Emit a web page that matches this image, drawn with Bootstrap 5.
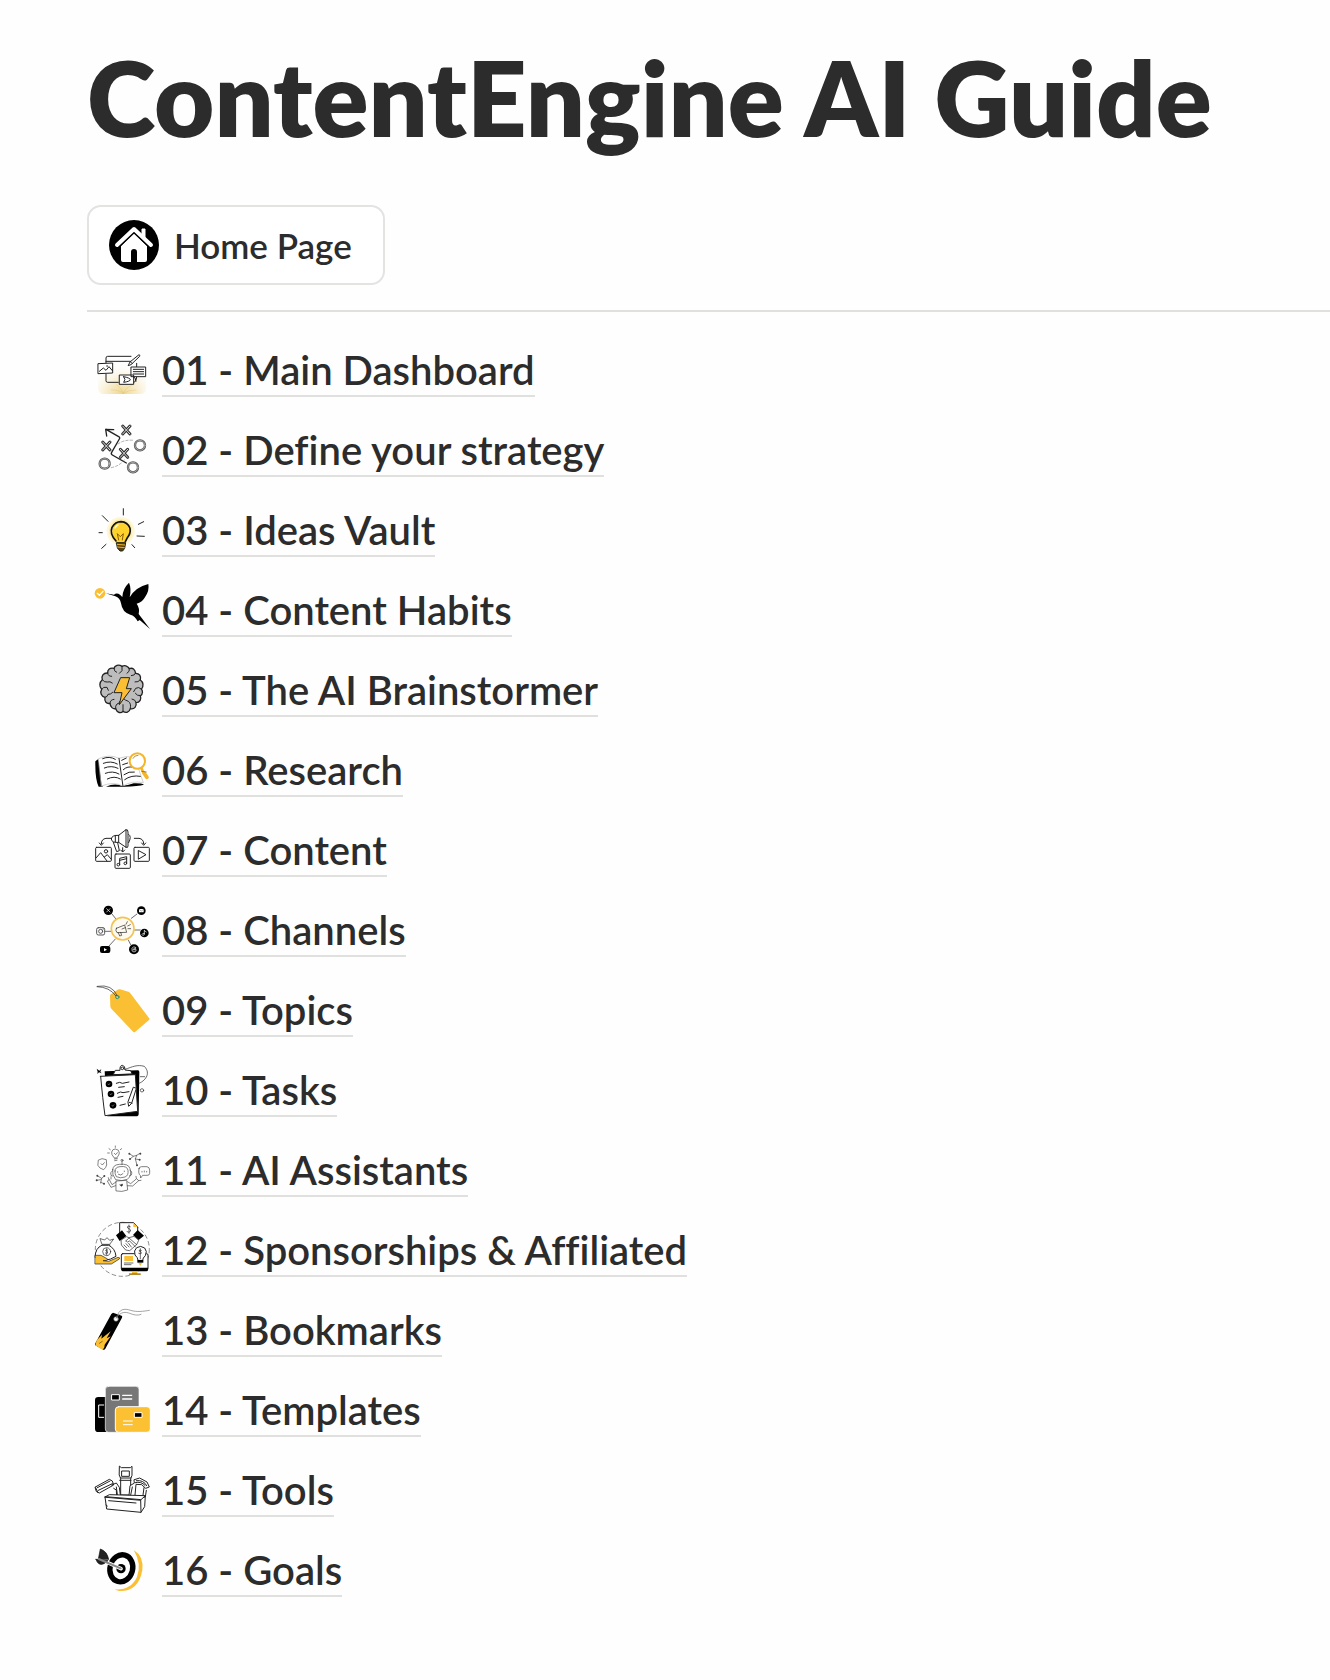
<!DOCTYPE html>
<html lang="en">
<head>
<meta charset="utf-8">
<meta name="viewport" content="width=device-width, initial-scale=1">
<title>ContentEngine AI Guide</title>
<link href="https://cdn.jsdelivr.net/npm/bootstrap@5.3.0/dist/css/bootstrap.min.css" rel="stylesheet">
<style>
  body { font-family: Lato, "Open Sans", sans-serif; color: #2c2c2c; background: #fefefe; }
  .guide { padding: 37px 0 80px 87px; }
  .guide-title { font-size: 104px; line-height: 120px; font-weight: 800; margin: 0 0 48px; }
  .home-btn { gap: 15px; height: 80px; padding: 0 31px 0 20px; border: 2px solid #e3e3e2; border-radius: 14px; font-size: 35px; font-weight: 600; line-height: 42px; color: inherit; background: #fff; }
  .home-btn svg { width: 50px; height: 50px; }
  .guide-rule { margin: 25px 0 30px; border-top: 2px solid #e0e0df; opacity: 1; }
  .guide-list { gap: 25px; padding: 0 0 0 8px; }
  .guide-list li { gap: 12px; height: 55px; }
  .guide-list a { color: inherit; text-decoration: none; font-size: 40px; font-weight: 600; line-height: 50px; border-bottom: 2px solid #e0e0df; font-variant-ligatures: none; }
  .pic { width: 55px; height: 55px; flex: none; overflow: visible; fill: none; stroke: #222; stroke-width: 3; stroke-linecap: round; stroke-linejoin: round; }
  .pic .k { fill: #000; stroke: none; }
  .pic .w { fill: #fff; }
  .pic .y { fill: #fbbf33; stroke: none; }
  .pic .thin { stroke-width: 2; }
</style>
</head>
<body>
<main class="guide">
  <h1 class="guide-title">ContentEngine AI Guide</h1>
  <button type="button" class="home-btn d-inline-flex align-items-center">
    <svg viewBox="0 0 50 50" aria-hidden="true"><circle cx="25" cy="25" r="25"/><path d="M12 26 25 13l13 13v14q0 2-2 2h-8V32q0-3-3-3t-3 3v10h-8q-2 0-2-2z" fill="#fff"/><path d="M8 25 25 9l17 16" fill="none" stroke="#000" stroke-width="7"/><path d="M33 17V9h3v11z" fill="#fff" stroke="#fff"/><path d="M8 25 25 9l17 16" fill="none" stroke="#fff" stroke-width="4" stroke-linecap="round" stroke-linejoin="round"/></svg>
    <span>Home Page</span>
  </button>
  <hr class="guide-rule">
  <ul class="guide-list list-unstyled d-flex flex-column mb-0">
    <li class="d-flex align-items-end">
      <svg class="pic" viewBox="27 6 165 165" aria-hidden="true">
        <defs><radialGradient id="glow" cx=".5" cy="1" r=".8"><stop offset="0" stop-color="#efd690"/><stop offset=".5" stop-color="#faf2dc"/><stop offset="1" stop-color="#fff" stop-opacity="0"/></radialGradient></defs>
        <rect x="36" y="40" width="144" height="122" rx="16" fill="url(#glow)" stroke="none"/>
        <path d="M60 70V54q0-5 5-5h70M152 70v12M60 64h74M60 102v20q0 5 5 5h32M140 127q11 2 12-16"/>
        <path d="M92 134q14 8 20 26M138 136q-20 6-26 24M76 150q22-2 36 10M150 150q-20-2-38 10" stroke="#dfbd60" stroke-width="1"/>
        <path class="w" d="M37 71 80 69v30l-43 2zM136 81h43v29h-43zM101 105h42v28h-42z"/>
        <path d="m40 94 12-10 8 7 9-11 10 12M62 78h3M142 88h31M142 95h31M142 102h31M113 110q20 4 20 9t-20 8q8-8 0-17M142 110q8 2 8 14"/>
        <path d="m127 76 5-10 27-22q4 1 2 5l-25 24zM135 67l4 4"/>
      </svg>
      <a href="#main-dashboard">01 - Main Dashboard</a>
    </li>
    <li class="d-flex align-items-end">
      <svg class="pic" viewBox="27 246 165 165" aria-hidden="true">
        <path d="m60 268 38 22q5 2 2 7l-23 40q-3 5 2 8l42 24M62 288l-3-20 24 1" stroke-width="4"/>
        <path d="M96 312q18-14 48-11M76 383q28-6 42-28" stroke="#888" stroke-width="2" stroke-dasharray="7 6"/>
        <g stroke="#333" stroke-width="9"><path d="m110 258 22 24M132 258l-22 24M50 306l22 24M72 306l-22 24M103 328l22 24M125 328l-22 24"/></g>
        <g stroke="#ddd" stroke-width="3"><path d="m110 258 22 24M132 258l-22 24M50 306l22 24M72 306l-22 24M103 328l22 24M125 328l-22 24"/></g>
        <g stroke="#555" stroke-width="7"><circle cx="162" cy="316" r="15"/><circle cx="56" cy="371" r="15"/><circle cx="141" cy="382" r="15"/></g>
        <g stroke="#c8c8c8" stroke-width="2"><circle cx="162" cy="316" r="15"/><circle cx="56" cy="371" r="15"/><circle cx="141" cy="382" r="15"/></g>
      </svg>
      <a href="#strategy">02 - Define your strategy</a>
    </li>
    <li class="d-flex align-items-end">
      <svg class="pic" viewBox="27 21 165 165" aria-hidden="true">
        <circle cx="104" cy="108" r="42" fill="#fff6d3" stroke="none"/><circle cx="104" cy="108" r="35" fill="#fdebaa" stroke="none"/>
        <path d="M112 41v19M49 62l17 17M157 88l16-8M153 123l22 1M39 113h10M47 160l13-12M138 149l8 9"/>
        <path d="M93 144q-1-8-9-15-12-24 4-41 17-14 34 0 15 19 1 39-7 8-7 17z" fill="#fdd22c" stroke="none"/>
        <path d="M90 138q-20-22-12-41 10-17 27-17 20 1 27 20 3 15-9 30l-5 10" stroke="#111" stroke-width="5"/>
        <path d="M87 99q3-7 9-9" stroke="#fff" stroke-width="4"/>
        <path d="m98 135-4-19 9 9 9-9-3 19" stroke="#8a5b00"/>
        <path d="M92 143h27l-3 17-6 8h-8l-7-8z" fill="#5b4307" stroke="#222"/><path d="m94 148 22 2M95 156l20 2" stroke="#ecb32b"/>
      </svg>
      <a href="#ideas">03 - Ideas Vault</a>
    </li>
    <li class="d-flex align-items-end">
      <svg class="pic" viewBox="27 261 165 165" aria-hidden="true">
        <circle class="y" cx="42" cy="295" r="16"/><path d="m34 295 6 6 11-12" stroke="#fff" stroke-width="4"/>
        <path class="k" d="m59 295 25 4q8-7 18 0l7 7q1-25 20-43 8 18 2 44 18-31 56-40 4 21-11 41-8 13-24 18 10 14 6 31l34 45-31-27-6 4q-8-17-22-20-24-6-28-34-3-16-17-21z"/>
      </svg>
      <a href="#habits">04 - Content Habits</a>
    </li>
    <li class="d-flex align-items-end">
      <svg class="pic" viewBox="27 36 165 165" aria-hidden="true">
        <path d="M108 49c-10-7-22-3-24 6-12-3-20 4-19 14-13-1-20 9-16 20-10 8-9 22-2 29-6 10-1 22 10 24-3 13 5 20 15 18 1 11 9 18 17 16 5 13 16 15 22 8 9 6 19 3 22-8 12 3 20-7 17-18 12 0 17-11 13-20 9-7 7-16 3-20 8-9 6-22-3-28 3-12-3-20-14-20-2-12-9-18-19-14-5-9-15-11-22-7z" fill="#bdbdbd" stroke-width="4"/>
        <path d="M84 55q-1 9 8 12M65 69q0 10 12 10M49 89q5 9 15 7q8-3 15 3M47 118q5-9 16-6l4 9M57 142q8-1 9-9 8 1 14-6M72 160q0-11 12-12M89 176q-2-9 4-14 8-1 9-8M108 49v13l-8 8M130 55q3 10-7 15M149 69q-2 8-13 8M163 89q-6 9-16 7M166 117q-8-8-17-2l-6 10M163 137q-10 1-15-7M150 157q-2-9-12-10M133 175q3-15-6-21-10-3-14-8M111 184v-20"/>
        <path d="M105 83h26l-10 33h15l-36 48 8-36H85z" fill="#fbbf33"/>
      </svg>
      <a href="#brainstormer">05 - The AI Brainstormer</a>
    </li>
    <li class="d-flex align-items-end">
      <svg class="pic" viewBox="27 276 165 165" aria-hidden="true">
        <path class="k" d="m28 334 9-7 13 83H38q-11-22-10-76zM60 410q24-12 48-3 18 0 35-7 23-1 31 4-16 5-60 6z"/>
        <path class="w" d="M38 326q32-15 61-1 21-10 47-2l26 75q-34-7-61 10-30-15-64 0z" stroke="#bbb" stroke-width="2"/>
        <path d="m99 325 12 84M50 326q20-9 38 2M52 340q23-9 42 2M55 354q21-9 41 1M58 370q22-9 41 2M64 387q21-11 39 0M107 331l14-7M110 344l15-5M112 359q12-12 31-7M114 374q15-11 31-8M116 389q20-15 47-10"/>
        <g stroke="#f5b52b"><circle cx="154" cy="333" r="23" fill="#fff" stroke-width="6"/><path d="m167 356 3 7" stroke-width="8"/><path d="m173 368 10 14" stroke-width="11"/></g>
        <path d="m167 364 14 2M141 325q5-10 15-9" stroke="#76591c" stroke-width="2"/>
      </svg>
      <a href="#research">06 - Research</a>
    </li>
    <li class="d-flex align-items-end">
      <svg class="pic" viewBox="27 21 165 165" aria-hidden="true">
        <path d="M77 70H60q-14 2-14 16M145 70h14q14 2 14 16M110 98v12M40 84l6 7 6-7M167 84l6 7 6-7M104 105l6 6 6-6"/>
        <path class="w" d="m98 61 22-17v53L98 82q-21 2-22-10 1-12 22-11zM120 44q6-2 6 7v42q0 7-6 4M82 82l10 28 8-3-5-24M88 61v20M98 61v21M128 58q10 6 0 25"/>
        <rect x="29" y="97" width="47" height="42" rx="3"/><rect x="87" y="117" width="46" height="43" rx="3"/><rect x="144" y="97" width="46" height="42" rx="3"/>
        <circle cx="60" cy="109" r="5"/><path d="m31 128 13-15 19 25M55 126l9-7 11 13"/><path d="m158 107 22 12-22 13z"/>
        <path d="M101 148v-18l21-5v18M101 136l21-5"/><circle cx="97" cy="149" r="4"/><circle cx="118" cy="145" r="4"/>
      </svg>
      <a href="#content">07 - Content</a>
    </li>
    <li class="d-flex align-items-end">
      <svg class="pic" viewBox="27 261 165 165" aria-hidden="true">
        <path d="m78 297 11 14M153 297l-17 13M58 349h16M146 345h17M69 393l19-21M134 389l-7-14" class="thin"/>
        <circle cx="110" cy="341" r="34" fill="#fffaf0" stroke="#f3c454" stroke-width="5"/>
        <g class="k"><circle cx="67" cy="286" r="14"/><circle cx="166" cy="287" r="13"/><circle cx="175" cy="354" r="13"/><circle cx="144" cy="403" r="15"/><rect x="42" y="393" width="31" height="21" rx="6"/></g>
        <path d="m62 281 10 10M72 281l-10 10" stroke="#fff" stroke-width="2"/><rect x="159" y="282" width="14" height="10" rx="2" fill="#fff" stroke="none"/><path d="m159 283 7 5 7-5" stroke="#111" stroke-width="1"/>
        <path d="M175 346v13q-6 5-7-1 1-4 7-3M175 347l6 4" stroke="#fff" stroke-width="2"/><path d="m54 399 9 5-9 5z" fill="#fff" stroke="none"/>
        <path d="M149 397q-8-5-11 3-2 11 6 11 9-2 6-8-9-5-9 1 5 5 8-5" stroke="#fff" stroke-width="2"/>
        <g stroke="#555"><rect x="32" y="338" width="24" height="22" rx="5"/><circle cx="44" cy="349" r="6"/><path d="M51 342h1"/></g>
        <path class="thin" d="m91 340 25-10 6 22-29 1q-6-7-2-13zM97 353l4 10 6-2-3-9M108 342l10-4M120 328l4-8M125 333l8-4M126 341h8"/>
      </svg>
      <a href="#channels">08 - Channels</a>
    </li>
    <li class="d-flex align-items-end">
      <svg class="pic" viewBox="27 21 165 165" aria-hidden="true">
        <path class="y" d="M72 62q1-4 5-6l18-12q3-2 7-1l25 7q3 1 6 5l56 74q3 4-1 7l-40 34q-4 4-8-1L76 101q-3-3-3-7z"/>
        <circle cx="94" cy="66" r="5" fill="#d9d2a0" stroke="#2d8d68"/><path d="M33 35q38 1 56 27M34 34q45-8 60 29" stroke-width="2"/>
      </svg>
      <a href="#topics">09 - Topics</a>
    </li>
    <li class="d-flex align-items-end">
      <svg class="pic" viewBox="27 261 165 165" aria-hidden="true">
        <path class="k" d="m56 289 100-3q4 0 4 5l-2 126q0 7-8 7H64z"/><path class="w" d="m44 304 104-5 7 110-98 13q-7-50-13-118z"/>
        <path class="w" d="m82 298 6-12h14q-1-15 7-15 9 1 8 14l17 2 4 9z"/><circle cx="109" cy="280" r="4"/>
        <g class="k"><circle cx="69" cy="327" r="10"/><circle cx="75" cy="357" r="10"/><circle cx="81" cy="391" r="10"/></g>
        <path d="m66 327 2 3 4-5M72 357l2 3 4-5M78 391l2 3 4-5" stroke="#fff" stroke-width="1"/>
        <path d="m91 325 10-3 8 3 20-4M98 337l17-2M94 355l9-4 8 2 18-3M96 367l15-3M102 391l16-4"/>
        <path class="w" d="m143 337 8 3-14 45-9 9-2-12z"/><path d="m130 382 8 3"/>
        <path class="thin" d="M117 283c24-8 36-15 58-9 22 23 0 45-16 51M163 305h13"/><circle class="thin" cx="168" cy="346" r="5"/><path class="k" d="m32 281 8 6 6-5-3 8 4 5-8-3-5 5 1-7z"/>
      </svg>
      <a href="#tasks">10 - Tasks</a>
    </li>
    <li class="d-flex align-items-end">
      <svg class="pic" viewBox="27 21 165 165" aria-hidden="true">
        <g stroke="#444" stroke-width="2">
        <path d="M108 79v10M80 104q1-15 20-16 28-3 32 13 7 20-8 32-16 7-35 1-12-15-9-30z"/><circle cx="108" cy="76" r="3"/>
        <path d="M87 108q0-12 15-13 22-3 24 11 2 16-9 20-14 5-26-1-5-8-4-17zM80 107q-10 5-5 14l5 2M132 106q8 3 4 14l-5 2M95 110v2M115 108v2M97 118q8 6 14-2"/>
        <path d="m91 138 31-2 3 29q-17 7-34 3zM90 141l-12 8-8-15-6 4 11 19 14-5M124 140l10 6 18-15 6 6-18 16-16-1"/>
        <path d="m69 134-2-6M75 132v-7M151 130l-1-6M158 137l7-1"/><path d="m105 149 4-2q3 3-2 7l-5-4z" fill="#222"/>
        <path d="M84 68q-9-10-7-17 2-9 11-9 12 1 12 12 0 5-7 14zM85 72l9-1M86 77l7-1M85 55l4 4 5-6M73 44l-4-3M70 54h-5M103 44l4-3M88 37v-4"/>
        <path d="m38 75 10-4 13 3 1 16q-2 8-9 14-13-3-17-12zM45 86l4 4 6-7M159 101q0-6 8-6h16q8 2 8 10v10q-1 7-8 6h-13l-6 8-1-8q-7-4-4-20zM168 109v2M175 108v3M182 109v2"/>
        <path d="m130 56 12 8 10-3-4 11 12 2M142 64l-10 8M148 72l5 18M152 61l10-6M35 123l12 7-3 14M47 130l8-7M44 142l10 4M32 136l12-2"/>
        </g><g fill="#444" stroke="none"><circle cx="130" cy="56" r="3"/><circle cx="132" cy="72" r="3"/><circle cx="163" cy="56" r="3"/><circle cx="161" cy="74" r="3"/><circle cx="153" cy="91" r="3"/><circle cx="34" cy="122" r="3"/><circle cx="32" cy="136" r="3"/><circle cx="55" cy="123" r="3"/><circle cx="54" cy="146" r="3"/></g>
      </svg>
      <a href="#assistants">11 - AI Assistants</a>
    </li>
    <li class="d-flex align-items-end">
      <svg class="pic" viewBox="27 261 165 165" aria-hidden="true">
        <circle cx="109" cy="343" r="81" stroke="#555" stroke-dasharray="11 10" class="thin"/>
        <path class="w" d="M101 305v-42h42l12 13v30"/><path class="y" d="M142 263v13h13z"/>
        <path class="k" d="m90 301 18-15 13 17-20 15zM141 300l14-15 19 17-16 13z"/>
        <path class="w thin" d="m106 315 15-10 8 3 15-4 14 12-6 13-21 18-12-2-12-14zM119 318l10-9 23 20M120 318q3 7 11 0l17 17M114 330l8 8M120 326l9 10M128 325l8 11"/>
        <path class="w" d="M47 331q-19 8-20 36 28 19 63-3-2-23-21-33z"/><path class="w thin" d="m43 311 13 4 7-7 8 8 12-4-12 16H49z"/><path class="thin" d="M48 330h24"/><circle cx="62" cy="350" r="12" class="thin"/>
        <path d="M28 361h17l20 11q-1 7-14 5l17 2 28-12q7 0 4 5l-24 15H28z" fill="#fbbf33" stroke="#222" stroke-width="2"/>
        <rect x="106" y="356" width="80" height="49" rx="4" class="w"/><path class="k" d="M106 398h80v6q0 5-5 5h-70q-5 0-5-5z"/><path class="y" d="M115 363h26v15h-26zM138 410h16v6h10v4h-35v-4h9z"/><path d="M115 384h26M115 389h20M130 417h33" class="thin"/>
        <path class="w" d="M156 375q0-7-9-15-5-13 5-22 12-8 24 1 9 10 2 23-8 7-8 13z"/><path class="k" d="M154 375h18v8h-18z"/><path class="y" d="M157 384h11l-5 9z"/>
        <g class="thin"><path d="M133 275q-8-5-9 1 0 4 5 5 7 3 4 8-3 5-10 1M129 270v25M65 345q-6-3-6 2 7 1 6 7-2 3-7 0M62 341v19M166 346q-7-3-7 2 8 1 7 7-2 3-8 0M163 341v30"/></g>
      </svg>
      <a href="#sponsorships">12 - Sponsorships &amp; Affiliated</a>
    </li>
    <li class="d-flex align-items-end">
      <svg class="pic" viewBox="27 6 165 165" aria-hidden="true">
        <path class="k" d="m76 42 5-4 26 9q3 2 1 6l-50 93q-2 4-6 3l-24-13q-2-2 0-6z"/><path class="y" d="m32 121 16-17-2 12 28-22-12 21 12-6-18 25-1 8-5 8-22-14z"/><path d="m40 130 9-6" stroke="#5b420e" stroke-width="2"/>
        <circle cx="90" cy="57" r="7" fill="#fff" stroke="#666" stroke-width="2"/><path d="M91 54c8-29 24-29 43-23s38 3 56 0M91 54c13-21 29-18 40-14s23 8 34 3" stroke="#777" stroke-width="2"/>
      </svg>
      <a href="#bookmarks">13 - Bookmarks</a>
    </li>
    <li class="d-flex align-items-end">
      <svg class="pic" viewBox="27 246 165 165" aria-hidden="true">
        <rect class="k" x="27" y="291" width="48" height="105" rx="10"/><path d="M53 315H38v37h15" stroke="#fff"/>
        <rect x="58" y="259" width="101" height="138" rx="10" fill="#777" stroke="#fff" stroke-width="2"/><rect x="78" y="284" width="22" height="16" fill="#000" stroke="#fff"/><path d="M110 286h27M110 297h27" stroke="#fff" stroke-width="4"/>
        <rect x="88" y="320" width="105" height="77" rx="10" fill="#fcc033" stroke="#fff"/><rect x="146" y="338" width="22" height="14" fill="#000" stroke="#fff"/><path d="M112 363h27M112 374h27" stroke="#fff" stroke-width="3"/>
      </svg>
      <a href="#templates">14 - Templates</a>
    </li>
    <li class="d-flex align-items-end">
      <svg class="pic" viewBox="27 21 165 165" aria-hidden="true">
        <path class="w" d="m101 34 5 4h27l5-4v27l-4 10v49h-30V70l-4-9zM108 48h22v16h-22zM103 69h32M101 76h34" />
        <path class="w" d="m28 96 42-23 9 5 4 12-43 24-8-4zM34 98l38-20M37 106l42-20M29 98l7 15M77 90l14-6 9 13 4 31H92l-1-23-8-5M91 96l4 30"/>
        <path class="w" d="m145 74 16-5 22 12 7 15-11 4-12-11-17-1-4 43h-18l4-39 12-7zM139 96l-6 29M148 83q17-5 29 8M151 77q22-3 31 15M174 98l-4 30 8-2 3-20"/>
        <path class="w" d="m57 126 13-7 108 3-14 13zM57 126l5 36 103 10-1-37zM165 172l11-17 2-33M68 137l82 7M60 150l4 3"/>
      </svg>
      <a href="#tools">15 - Tools</a>
    </li>
    <li class="d-flex align-items-end">
      <svg class="pic" viewBox="27 261 165 165" aria-hidden="true">
        <path class="y" d="M143 285q31 19 26 60-11 65-69 63-9-1-14-5 49 3 67-37 15-39-10-81z"/>
        <ellipse cx="106" cy="340" rx="34" ry="41" fill="#fff" stroke="#000" stroke-width="16" transform="rotate(15 106 340)"/><circle class="k" cx="105" cy="341" r="14"/>
        <path d="m39 311 66 30" stroke="#fff" stroke-width="11"/><path d="m37 312 6-30q20 6 25 31zM30 313l36 4-12 9q-18 8-24-13z" fill="#222" stroke="#111" stroke-width="2"/><path d="m38 312 66 28" stroke="#888" stroke-width="6"/>
      </svg>
      <a href="#goals">16 - Goals</a>
    </li>
  </ul>
</main>
<script src="https://cdn.jsdelivr.net/npm/bootstrap@5.3.0/dist/js/bootstrap.bundle.min.js"></script>
</body>
</html>
